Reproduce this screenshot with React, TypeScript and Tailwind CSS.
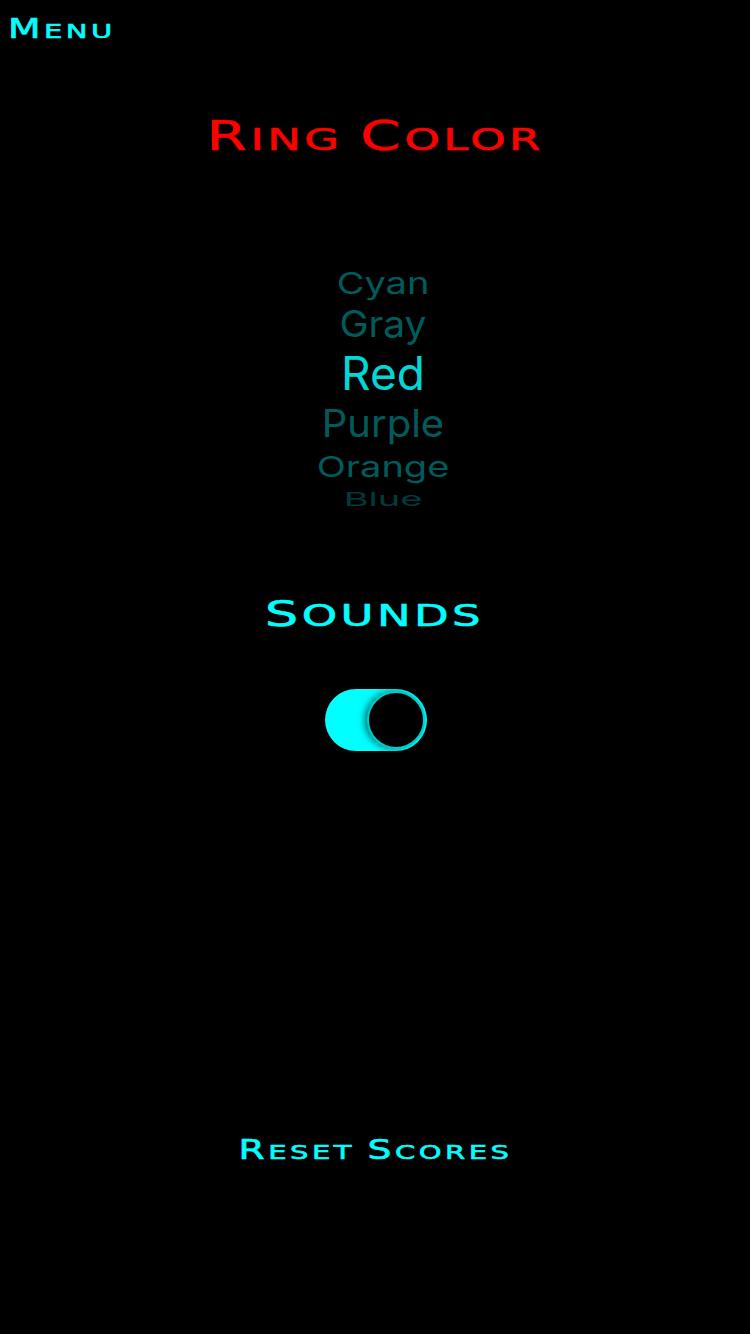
export default function App() {
  const cap =
    "inline-block font-['DejaVu_Sans',sans-serif] tracking-[0.15em] scale-x-[1.45] [-webkit-text-stroke:0.6px_currentColor]";

  return (
    <div className="w-[750px] h-[1334px] bg-black flex flex-col overflow-hidden">
      <div className="pl-[8px] pt-[16px] h-[50px] leading-none text-[#00ffff]">
        <span className={`${cap} origin-left`}>
          <span className="text-[26px]">M</span>
          <span className="text-[20px]">ENU</span>
        </span>
      </div>

      <div className="text-center mt-[66px] leading-none text-[#ff0000]">
        <span className={cap}>
          <span className="text-[40px]">R</span>
          <span className="text-[31px]">ING </span>
          <span className="text-[40px]">C</span>
          <span className="text-[31px]">OLOR</span>
        </span>
      </div>

      {/* picker wheel */}
      <div className="mt-[108px] flex flex-col items-center pl-[16px] font-['Inter',sans-serif] leading-none text-[#005c5c]">
        <div className="text-[38px] h-[40px] scale-y-[0.78]">Cyan</div>
        <div className="text-[39px] h-[46px] scale-y-[0.95]">Gray</div>
        <div className="text-[46px] h-[54px] text-[#00d8d8]">Red</div>
        <div className="text-[40px] h-[44px] scale-y-[0.95]">Purple</div>
        <div className="text-[38px] h-[36px] scale-y-[0.75]">Orange</div>
        <div className="text-[38px] h-[22px] scale-y-[0.5] text-[#003a3a]">Blue</div>
      </div>

      <div className="text-center mt-[90px] leading-none text-[#00ffff]">
        <span className={cap}>
          <span className="text-[36px]">S</span>
          <span className="text-[31px]">OUNDS</span>
        </span>
      </div>

      <div className="flex justify-center mt-[57px] pl-[2px]">
        <div className="w-[102px] h-[62px] rounded-full bg-[#00ffff] flex items-center justify-end p-[2px]">
          <div className="w-[58px] h-[58px] rounded-full bg-black border-[2px] border-[#00cccc] shadow-[-3px_0_6px_rgba(0,0,0,0.5)]" />
        </div>
      </div>

      <div className="flex-1" />

      <div className="text-center mb-[171px] leading-none text-[#00ffff]">
        <span className={cap}>
          <span className="text-[26px]">R</span>
          <span className="text-[20px]">ESET </span>
          <span className="text-[26px]">S</span>
          <span className="text-[20px]">CORES</span>
        </span>
      </div>
    </div>
  );
}
